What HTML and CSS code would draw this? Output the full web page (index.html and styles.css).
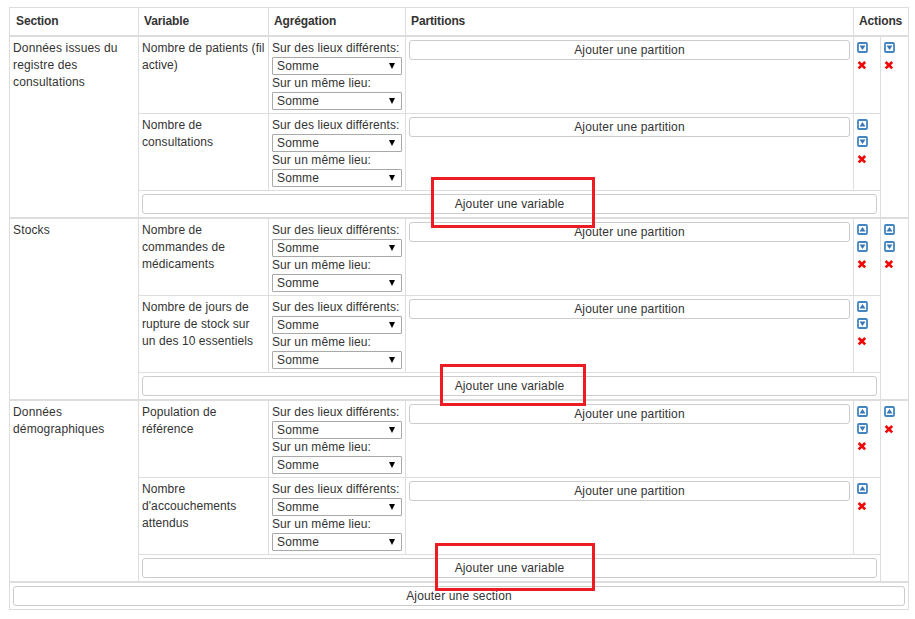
FILE: index.html
```html
<!DOCTYPE html>
<html lang="fr">
<head>
<meta charset="utf-8">
<title>Sections</title>
<link rel="stylesheet" href="styles.css">
</head>
<body>
<svg width="0" height="0" class="defs">
<symbol id="up" viewBox="0 0 11 11"><rect x="1" y="1" width="9" height="9" rx="1" fill="#fff" stroke="#4285c0" stroke-width="1.8"/><path d="M2.5 7.4L5.5 3.1L8.5 7.4Z" fill="#3a78b5"/></symbol>
<symbol id="down" viewBox="0 0 11 11"><rect x="1" y="1" width="9" height="9" rx="1" fill="#fff" stroke="#4285c0" stroke-width="1.8"/><path d="M2.5 3.6L5.5 7.9L8.5 3.6Z" fill="#3a78b5"/></symbol>
<symbol id="del" viewBox="0 0 11 11"><path d="M1.6 3L8.2 9.4M8.2 3L1.6 9.4" stroke="#f00808" stroke-width="2.7"/></symbol>
</svg>
<main class="sheet" id="sheet"></main>
<script src="app.js"></script>
</body>
</html>
```
FILE: styles.css
```css
* { box-sizing: border-box; }
body { margin: 0; padding: 7px 0 0 9px; background: #fff; color: #333; font: 12px/17px "Liberation Sans", Arial, sans-serif; letter-spacing: 0.15px; }
.defs { position: absolute; }
.sheet { width: 900px; border: 1px solid #ddd; }
.head { display: grid; grid-template-columns: 128px 130px 137px 448px 55px; height: 29px; border-bottom: 2px solid #ddd; font-weight: bold; letter-spacing: -0.12px; }
.head > div { padding: 5px 0 0 6px; }
.head > div + div, .section > div + div, .row > div + div { border-left: 1px solid #ddd; }
.head > div + div { padding-left: 5px; }
.section { display: grid; grid-template-columns: 128px 742px 28px; height: 182px; border-bottom: 2px solid #ddd; }
.name, .cell { padding: 3px; }
.variable { letter-spacing: 0.08px; }
.row { display: grid; grid-template-columns: 129px 137px 448px 27px; height: 77px; border-bottom: 1px solid #ddd; }
.label { white-space: nowrap; letter-spacing: 0.09px; }
.select { display: flex; justify-content: space-between; align-items: center; height: 18px; border: 1px solid #a9a9a9; border-radius: 1px; padding: 0 6px 0 4px; }
.select svg { width: 6px; height: 6px; fill: #000; }
.add { position: relative; padding: 3px; }
.button { height: 20px; border: 1px solid #ccc; border-radius: 3px; text-align: center; line-height: 18px; }
.icons { display: flex; flex-direction: column; gap: 6px; padding: 5px 0 0 3px; }
.icons svg { width: 11px; height: 11px; }
.mark { position: absolute; z-index: 2; border: 3px solid #ed1c24; }
.mark-a { left: 292px; top: -14px; width: 164px; height: 51px; }
.mark-b { left: 301px; top: -9px; width: 146px; height: 42px; }
.mark-c { left: 296px; top: -12px; width: 160px; height: 48px; }
```
FILE: app.js
```js
const sections = [
  { name: "Données issues du registre des consultations", mark: "a", actions: ["down", "del"], rows: [
    ["Nombre de patients (fil active)", ["down", "del"]],
    ["Nombre de consultations", ["up", "down", "del"]]] },
  { name: "Stocks", mark: "b", actions: ["up", "down", "del"], rows: [
    ["Nombre de commandes de médicaments", ["up", "down", "del"]],
    ["Nombre de jours de rupture de stock sur un des 10 essentiels", ["up", "down", "del"]]] },
  { name: "Données démographiques", mark: "c", actions: ["up", "del"], rows: [
    ["Population de référence", ["up", "down", "del"]],
    ["Nombre d'accouchements attendus", ["up", "del"]]] }
];
const icons = list => `<div class="icons">${list.map(i => `<svg><use href="#${i}"/></svg>`).join("")}</div>`;
const select = label => `<div class="label">${label}</div><div class="select"><span>Somme</span><svg viewBox="0 0 6 6"><path d="M0 0H6L3 6Z"/></svg></div>`;
const row = ([name, actions]) => `<div class="row"><div class="cell variable">${name}</div>
<div class="cell">${select("Sur des lieux différents:")}${select("Sur un même lieu:")}</div>
<div class="cell"><div class="button">Ajouter une partition</div></div>${icons(actions)}</div>`;
document.getElementById("sheet").innerHTML =
  `<div class="head"><div>Section</div><div>Variable</div><div>Agrégation</div><div>Partitions</div><div>Actions</div></div>` +
  sections.map(s => `<div class="section"><div class="name">${s.name}</div><div>${s.rows.map(row).join("")}
<div class="add"><div class="button">Ajouter une variable</div><div class="mark mark-${s.mark}"></div></div></div>${icons(s.actions)}</div>`).join("") +
  `<div class="add"><div class="button">Ajouter une section</div></div>`;
```
